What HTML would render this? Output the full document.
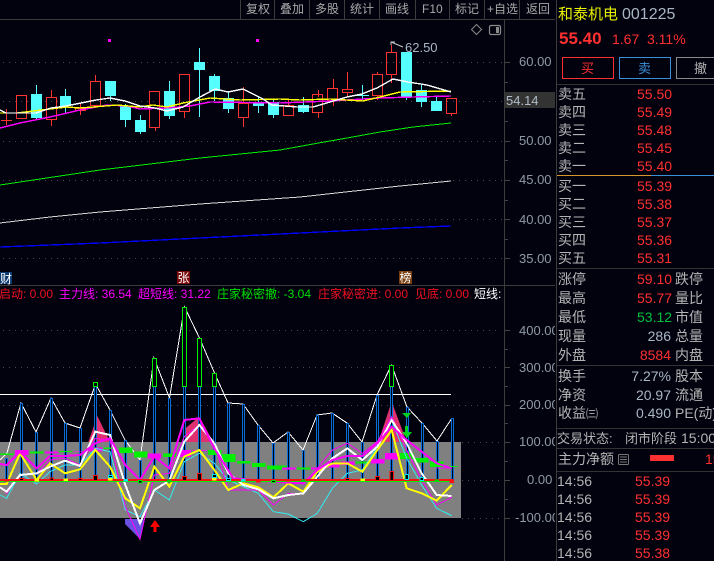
<!DOCTYPE html>
<html><head><meta charset="utf-8">
<style>
html,body{margin:0;padding:0;background:#02020f;width:714px;height:561px;overflow:hidden}
svg{display:block;position:absolute;left:0;top:0}
text{font-family:"Liberation Sans","WenQuanYi Zen Hei","Noto Sans CJK SC",sans-serif;font-size:14px;fill:#b4b4b4}
.t text{font-size:12px;fill:#a8a8a8}
.ax text{font-size:13px;fill:#8f9aa5}
.l text{font-size:12px}
.p{fill:#ff3030}
.c{fill:#a9b6c4}
polyline{shape-rendering:crispEdges}
</style></head><body>
<svg width="714" height="561" viewBox="0 0 714 561" xmlns="http://www.w3.org/2000/svg">
<rect width="714" height="561" fill="#02020f"/>

<!-- dotted grids -->
<g stroke="#4a4a4a" stroke-dasharray="1 5" fill="none" shape-rendering="crispEdges">
<path d="M3 62.5H502M3 101.5H502M3 141.5H502M3 180.5H502M3 219.5H502M3 258.5H502"/>
<path d="M3 330.5H500M3 367.5H500M3 405.5H500M462 442.5H500M462 480.5H500M462 518.5H500"/>
</g>

<!-- MA lines -->
<g fill="none" stroke-width="1">
<polyline stroke="#0000ff" stroke-width="1.3" points="0,247 100,243 200,238 300,233 400,228 451,226"/>
<polyline stroke="#d8d8d8" points="0,223 50,217 100,212 200,204 300,197 400,186 451,181"/>
<polyline stroke="#00f000" points="0,185 100,170 200,158 280,150 313,144 347,138 380,132 413,127 451,123"/>
</g>

<!-- candles -->
<g shape-rendering="crispEdges">
<g fill="none" stroke="#ff3232">
<path d="M6.5 109V125M1 120.5H12"/>
<path d="M51.5 90V97M51.5 119V126M80.5 103V115M75 108.5H86M95.5 75V81M155.5 128V131M184.5 111V118M243.5 87V103M243.5 117V127M288.5 100V105M318.5 90V97M318.5 112V118M333.5 79V88M333.5 100V106M347.5 72V89M347.5 92V96M377.5 72V74M377.5 95V100M391.5 45V52M391.5 74V83M451.5 113V116"/>
<rect x="16.500" y="95.500" width="10" height="23"/>
<rect x="46.500" y="97.500" width="10" height="22"/>
<rect x="75.500" y="108.500" width="10" height="2"/>
<rect x="90.500" y="81.500" width="10" height="24"/>
<rect x="149.500" y="91.500" width="10" height="36"/>
<rect x="179.500" y="74.500" width="10" height="37"/>
<rect x="238.500" y="103.500" width="10" height="14"/>
<rect x="283.500" y="105.500" width="10" height="10"/>
<rect x="312.500" y="94.500" width="10" height="18"/>
<rect x="327.500" y="88.500" width="10" height="12"/>
<rect x="342.500" y="89.500" width="10" height="3"/>
<rect x="372.500" y="74.500" width="10" height="21"/>
<rect x="386.500" y="52.500" width="10" height="22"/>
<rect x="446.500" y="98.500" width="10" height="15"/>
</g>
<g fill="#55ffff" stroke="none">
<rect x="36" y="85" width="1" height="34"/><rect x="31" y="94" width="11" height="24"/>
<rect x="65" y="89" width="1" height="24"/><rect x="60" y="96" width="11" height="10"/>
<rect x="110" y="81" width="1" height="20"/><rect x="105" y="81" width="11" height="15"/>
<rect x="125" y="104" width="1" height="23"/><rect x="120" y="106" width="11" height="14"/>
<rect x="140" y="115" width="1" height="19"/><rect x="135" y="120" width="11" height="12"/>
<rect x="169" y="81" width="1" height="38"/><rect x="164" y="91" width="11" height="25"/>
<rect x="199" y="48" width="1" height="69"/><rect x="194" y="62" width="11" height="8"/>
<rect x="214" y="74" width="1" height="27"/><rect x="209" y="76" width="11" height="15"/>
<rect x="228" y="92" width="1" height="21"/><rect x="223" y="98" width="11" height="11"/>
<rect x="258" y="97" width="1" height="16"/><rect x="253" y="102" width="11" height="4"/>
<rect x="273" y="100" width="1" height="18"/><rect x="268" y="102" width="11" height="13"/>
<rect x="303" y="97" width="1" height="16"/><rect x="298" y="105" width="11" height="7"/>
<rect x="362" y="85" width="1" height="15"/><rect x="356" y="95" width="13" height="1"/>
<rect x="406" y="52" width="1" height="48"/><rect x="401" y="52" width="11" height="45"/>
<rect x="421" y="85" width="1" height="22"/><rect x="416" y="90" width="11" height="12"/>
<rect x="436" y="97" width="1" height="14"/><rect x="431" y="101" width="11" height="10"/>
</g>
</g>

<g fill="none" stroke-width="1.4">
<polyline stroke="#ff00ff" points="0,128 20,123 50,117 80,110 107,105 127,106 140,109 167,108 190,106 210,102 280,103 330,101 380,98 413,97 451,96"/>
<polyline stroke="#ffff00" points="0,113 17,113 33,111 50,109 67,107 80,108 93,107 117,105 140,107 153,105 167,107 183,103 210,98 240,100 280,99 300,100 330,99 363,101 380,97 400,92 451,91"/>
<polyline stroke="#ffffff" points="0,110 6,113 21,113 36,113 51,108 66,106 81,103 96,100 110,98 125,101 140,106 155,108 167,111 183,107 200,97 215,89 228,92 243,89 263,99 272,105 297,107 313,107 330,102 347,97 362,94 377,88 393,79 408,82 427,85 451,92"/>
</g>

<rect x="108" y="39" width="3" height="3" fill="#ff00ff"/>
<rect x="256" y="39" width="3" height="3" fill="#ff00ff"/>

<!-- high flag -->
<path d="M391 45V42H395M391 42L403 47" stroke="#c8c8c8" fill="none"/>
<text x="405" y="52" class="c" style="font-size:13px">62.50</text>

<!-- icons -->
<path d="M476.500 24.500L481.500 29.500L476.500 34.500L471.500 29.500Z" fill="none" stroke="#8a8a8a"/>
<rect x="489.500" y="25.500" width="11" height="9" rx="1.500" fill="none" stroke="#8a8a8a" stroke-width="1.200"/>
<rect x="496" y="27" width="3" height="6" fill="#8a8a8a"/>

<!-- subchart grey region -->
<rect x="0" y="442" width="461" height="76" fill="#808080"/>

<!-- pink/purple fills -->
<g transform="translate(0,410) scale(.33333)">
<path d="M292 18L265 96H330Z" fill="#e0306f"/>
<path d="M598 20L556 55V96H640Z" fill="#e0306f"/>
<path d="M1175 -25L1135 96H1220Z" fill="#e0306f"/>
<path d="M375 327V342L421 388L432 327Z" fill="#6a50e0"/>
</g>

<!-- thin white -->
<polyline fill="none" stroke="#fff" points="0,460 7,453 21,403 36,432 51,398 65,423 80,428 95.5,384 110,410 125,440 140,460 154,358 169.5,398 184.5,307 199.5,338 214.5,373 228,403 243,404 258,425 273,443 288,432 303,450 317,415 332,413 347,423 362,442 377,395 391.5,365 407,407 422,423 437,441 452,418"/>
<rect x="0" y="394" width="451" height="1" fill="#fff"/>

<!-- blue bars -->
<g stroke="#0a6ed8" stroke-width="3" fill="none" shape-rendering="crispEdges">
<path d="M6.500 458V480M21.500 403V480M36.500 432V480M51.500 398V480M65.500 423V480M80.500 428V480M95.500 387V480M110.500 410V480M125.500 440V480M140.500 460V480M154.500 387V480M169.500 398V480M184.500 387V480M199.500 387V480M214.500 387V480M228.500 403V480M243.500 404V480M258.500 425V480M273.500 443V480M288.500 432V480M303.500 450V480M317.500 415V480M332.500 413V480M347.500 423V480M362.500 442V480M377.500 395V480M391.500 387V480M407.500 407V480M422.500 423V480M437.500 441V480M452.500 418V480"/>
</g>
<g stroke="#02020f" stroke-width="1" fill="none" shape-rendering="crispEdges">
<path d="M6.500 459V480M21.500 404V480M36.500 433V480M51.500 399V480M65.500 424V480M80.500 429V480M95.500 387V480M110.500 411V480M125.500 441V480M140.500 461V480M154.500 387V480M169.500 399V480M184.500 387V480M199.500 387V480M214.500 387V480M228.500 404V480M243.500 405V480M258.500 426V480M273.500 444V480M288.500 433V480M303.500 451V480M317.500 416V480M332.500 414V480M347.500 424V480M362.500 443V480M377.500 396V480M391.500 387V480M407.500 408V480M422.500 424V480M437.500 442V480M452.500 419V480"/>
</g>
<!-- green hollow tops -->
<g fill="#02020f" stroke="#00f000" shape-rendering="crispEdges">
<rect x="93.500" y="382.500" width="4" height="4"/>
<rect x="152.500" y="358.500" width="4" height="28"/>
<rect x="182.500" y="307.500" width="4" height="79"/>
<rect x="197.500" y="338.500" width="4" height="48"/>
<rect x="212.500" y="373.500" width="4" height="13"/>
<rect x="389.500" y="365.500" width="4" height="21"/>
</g>

<!-- horizontal block bars & lines -->
<g transform="translate(0,410) scale(.33333)" shape-rendering="crispEdges">
<g fill="#00f000">
<rect x="0" y="131" width="40" height="4"/><rect x="90" y="125" width="40" height="6"/><rect x="176" y="123" width="40" height="3"/>
<rect x="311" y="113" width="40" height="4"/><rect x="357" y="113" width="40" height="16"/><rect x="402" y="125" width="40" height="18"/>
<rect x="489" y="131" width="40" height="10"/><rect x="624" y="120" width="40" height="15"/><rect x="666" y="132" width="40" height="24"/>
<rect x="711" y="153" width="40" height="8"/><rect x="756" y="159" width="40" height="12"/><rect x="801" y="167" width="40" height="12"/>
<rect x="841" y="167" width="20" height="12"/><rect x="891" y="173" width="40" height="6"/><rect x="1067" y="155" width="40" height="6"/>
<rect x="1200" y="129" width="40" height="18"/><rect x="1245" y="144" width="40" height="14"/><rect x="1290" y="155" width="40" height="16"/><rect x="1335" y="168" width="38" height="3"/>
</g>
<g fill="#ff00ff">
<rect x="45" y="120" width="40" height="15"/><rect x="135" y="124" width="40" height="7"/><rect x="221" y="124" width="40" height="2"/>
<rect x="267" y="113" width="40" height="12"/><rect x="443" y="131" width="40" height="14"/><rect x="533" y="120" width="40" height="21"/>
<rect x="579" y="120" width="40" height="3"/><rect x="846" y="173" width="40" height="6"/><rect x="933" y="172" width="40" height="7"/>
<rect x="978" y="161" width="40" height="12"/><rect x="1023" y="155" width="40" height="10"/><rect x="1113" y="147" width="40" height="14"/>
<rect x="1155" y="129" width="40" height="20"/><rect x="1310" y="172" width="40" height="4"/>
</g>
</g>

<!-- sub lines -->
<g transform="translate(0,410) scale(.33333)" fill="none">
<polyline stroke="#33e8f0" stroke-width="3" points="0,255 20,265 60,190 110,222 150,185 195,165 240,165 286,115 330,125 376,300 420,320 463,240 508,270 553,155 598,130 643,160 685,210 730,230 775,250 820,305 865,312 910,335 952,310 997,235 1042,190 1087,180 1132,110 1175,30 1220,145 1265,225 1310,295 1355,317"/>
<polyline stroke="#ff00ff" stroke-width="3" points="0,230 20,250 60,195 110,190 150,150 195,145 240,165 286,85 330,90 376,290 420,388 463,195 508,190 553,80 598,45 643,100 685,240 730,240 775,240 820,285 865,250 910,250 952,175 997,120 1042,100 1087,130 1132,95 1175,20 1220,120 1265,210 1310,285 1355,262"/>
<polyline stroke="#ffff00" stroke-width="6" points="0,222 20,222 60,130 110,210 150,160 195,190 240,178 286,120 330,170 376,265 420,295 463,170 508,230 553,140 598,120 643,180 685,240 730,220 775,232 820,262 865,220 910,245 952,185 997,160 1042,160 1087,185 1132,120 1175,60 1220,235 1265,250 1310,272 1355,225"/>
<polyline stroke="#ffffff" stroke-width="6" points="0,232 20,245 60,195 110,190 150,170 195,152 240,168 286,65 330,75 376,225 420,340 463,240 508,212 553,95 598,45 643,100 685,190 730,225 775,238 820,265 865,255 910,250 952,200 997,145 1042,115 1087,150 1132,110 1175,30 1220,100 1265,190 1310,255 1355,258"/>
<polyline stroke="#ff00ff" stroke-width="6" points="0,162 20,165 60,125 110,175 150,138 195,138 240,135 286,100 330,85 376,165 420,210 463,140 508,175 553,30 598,25 643,115 700,205 820,215 910,220 952,180 997,150 1042,138 1087,138 1132,100 1175,50 1220,90 1265,125 1310,160 1355,175"/>
</g>

<!-- red & green base lines -->
<rect x="0" y="481" width="453" height="1" fill="#00f000" shape-rendering="crispEdges"/>
<rect x="0" y="479" width="453" height="2" fill="#ff1010" shape-rendering="crispEdges"/>

<!-- little markers -->
<g transform="translate(0,410) scale(.33333)" shape-rendering="crispEdges" stroke-width="3">
<g fill="#ff1010"><rect x="13" y="208" width="14" height="7"/><rect x="768" y="208" width="14" height="10"/><rect x="858" y="208" width="14" height="7"/><rect x="1348" y="208" width="14" height="11"/></g>
<g fill="#000" stroke="#ff1010"><rect x="59" y="205" width="11" height="6"/><rect x="150" y="204" width="11" height="7"/><rect x="235" y="205" width="11" height="6"/><rect x="281" y="196" width="11" height="15"/><rect x="548" y="199" width="11" height="12"/><rect x="593" y="190" width="11" height="21"/><rect x="1037" y="205" width="11" height="6"/><rect x="1127" y="199" width="11" height="12"/><rect x="1170" y="184" width="11" height="27"/></g>
<g fill="#ffff00"><rect x="103" y="207" width="14" height="7"/><rect x="190" y="205" width="14" height="8"/><rect x="324" y="203" width="14" height="9"/><rect x="636" y="203" width="14" height="9"/><rect x="1081" y="205" width="14" height="8"/></g>
<g fill="#000" stroke="#00e8f0"><rect x="326" y="197" width="11" height="6"/><rect x="638" y="194" width="11" height="9"/><rect x="680" y="205" width="11" height="7"/><rect x="1215" y="194" width="11" height="15"/><rect x="1260" y="203" width="11" height="9"/></g>
<g fill="#00e8f0"><rect x="370" y="207" width="14" height="7"/><rect x="723" y="207" width="14" height="7"/></g>
<g fill="#000" stroke="#00e000"><rect x="415" y="211" width="11" height="8"/><rect x="815" y="211" width="11" height="6"/></g>
<g fill="#00d000"><rect x="501" y="209" width="14" height="8"/><rect x="903" y="209" width="14" height="7"/><rect x="1303" y="209" width="14" height="6"/></g>
</g>

<!-- arrows -->
<path d="M155 520L160 527H156.500V532H153.500V527H150Z" fill="#ff0000"/>
<path d="M402 413H411L407 418Z" fill="#00d020"/>
<path d="M405 426H408V432H412L407 438L402 432H405Z" fill="#00d020"/>

<!-- panel lines -->
<g fill="#3c3c3c" shape-rendering="crispEdges">
<rect x="0" y="19" width="555" height="1"/>
<rect x="0" y="285" width="555" height="1"/>
<rect x="504" y="19" width="1" height="542"/>
<rect x="240" y="0" width="1" height="19"/><rect x="274" y="0" width="1" height="19"/><rect x="309" y="0" width="1" height="19"/><rect x="344" y="0" width="1" height="19"/><rect x="379" y="0" width="1" height="19"/><rect x="415" y="0" width="1" height="19"/><rect x="449" y="0" width="1" height="19"/><rect x="484" y="0" width="1" height="19"/><rect x="519" y="0" width="1" height="19"/>
</g>
<path d="M505 62.500H510M505 82.500H508M505 101.500H510M505 121.500H508M505 141.500H510M505 160.500H508M505 180.500H510M505 200.500H508M505 219.500H510M505 239.500H508M505 258.500H510M505 330.500H510M505 349.500H508M505 367.500H510M505 386.500H508M505 405.500H510M505 423.500H508M505 442.500H510M505 461.500H508M505 480.500H510M505 499.500H508M505 518.500H510" stroke="#444" fill="none" shape-rendering="crispEdges"/>

<!-- toolbar -->
<g class="t">
<text x="246" y="13">复权</text><text x="280" y="13">叠加</text><text x="315" y="13">多股</text><text x="350" y="13">统计</text><text x="385" y="13">画线</text><text x="422" y="13">F10</text><text x="455" y="13">标记</text><text x="487" y="13">+自选</text><text x="526" y="13">返回</text>
</g>

<!-- badges -->
<rect x="0" y="272" width="12" height="12" fill="#0c3a70"/><text x="0" y="283" style="font-size:12px;fill:#fff">财</text>
<rect x="177" y="271" width="13" height="13" fill="#7a0a0a"/><text x="177.500" y="282" style="font-size:12px;fill:#fff">张</text>
<rect x="399" y="271" width="13" height="13" fill="#7a4010"/><text x="399.500" y="282" style="font-size:12px;fill:#fff">榜</text>

<!-- legend -->
<g class="l">
<text x="-1" y="298" style="fill:#f01020">启动: 0.00</text>
<text x="59" y="298" style="fill:#ff00ff">主力线: 36.54</text>
<text x="138" y="298" style="fill:#ff00ff">超短线: 31.22</text>
<text x="217" y="298" style="fill:#00e000">庄家秘密撤: -3.04</text>
<text x="318" y="298" style="fill:#f01020">庄家秘密进: 0.00</text>
<text x="415" y="298" style="fill:#f01020">见底: 0.00</text>
<text x="474" y="298" style="fill:#fff">短线:</text>
</g>

<!-- axis labels -->
<rect x="505" y="92" width="50" height="16" fill="#333"/>
<g class="ax">
<text x="519" y="66">60.00</text>
<text x="506" y="105" style="fill:#b0bcc8">54.14</text>
<text x="519" y="145">50.00</text>
<text x="519" y="184">45.00</text>
<text x="519" y="224">40.00</text>
<text x="519" y="263">35.00</text>
<text x="519" y="335">400.00</text>
<text x="519" y="372">300.00</text>
<text x="519" y="409">200.00</text>
<text x="519" y="446">100.00</text>
<text x="527" y="484">0.00</text>
<text x="515" y="522">-100.00</text>
</g>

<!-- right panel -->
<rect x="555" y="0" width="159" height="561" fill="#02020f"/>
<rect x="556" y="0" width="1" height="561" fill="#3c3c3c"/>
<text x="558" y="19" style="font-size:15px;fill:#e8f000">和泰机电</text>
<text x="622" y="19" class="c" style="font-size:16px">001225</text>
<text x="559" y="44" style="font-size:17px;font-weight:bold;fill:#ff3030">55.40</text>
<text x="612" y="44" class="p">1.67</text>
<text x="647" y="44" class="p">3.11%</text>
<rect x="562.500" y="57.500" width="51" height="21" fill="none" stroke="#ff3030"/>
<text x="581" y="73" class="p" style="font-size:13px">买</text>
<rect x="619.500" y="57.500" width="51" height="21" fill="none" stroke="#3a90d8"/>
<text x="638" y="73" style="font-size:13px;fill:#3a90d8">卖</text>
<rect x="676.500" y="57.500" width="51" height="21" fill="none" stroke="#8a8a8a"/>
<text x="694" y="73" style="font-size:13px">撤</text>
<g fill="#333" shape-rendering="crispEdges">
<rect x="557" y="84" width="157" height="1"/><rect x="557" y="268" width="157" height="1"/><rect x="557" y="365" width="157" height="1"/><rect x="557" y="428" width="157" height="1"/><rect x="557" y="448" width="157" height="1"/><rect x="557" y="471" width="157" height="1"/>
</g>
<rect x="557" y="175" width="94" height="1" fill="#d8962a"/><rect x="651" y="175" width="63" height="1" fill="#3a90d8"/>

<g>
<text x="558" y="99">卖五</text><text x="637" y="99" class="p">55.50</text>
<text x="558" y="117">卖四</text><text x="637" y="117" class="p">55.49</text>
<text x="558" y="135">卖三</text><text x="637" y="135" class="p">55.48</text>
<text x="558" y="153">卖二</text><text x="637" y="153" class="p">55.45</text>
<text x="558" y="171">卖一</text><text x="637" y="171" class="p">55.40</text>
<text x="558" y="191">买一</text><text x="637" y="191" class="p">55.39</text>
<text x="558" y="209">买二</text><text x="637" y="209" class="p">55.38</text>
<text x="558" y="227">买三</text><text x="637" y="227" class="p">55.37</text>
<text x="558" y="245">买四</text><text x="637" y="245" class="p">55.36</text>
<text x="558" y="263">买五</text><text x="637" y="263" class="p">55.31</text>

<text x="558" y="284">涨停</text><text x="637" y="284" class="p">59.10</text><text x="675" y="284">跌停</text>
<text x="558" y="303">最高</text><text x="637" y="303" class="p">55.77</text><text x="675" y="303">量比</text>
<text x="558" y="322">最低</text><text x="637" y="322" style="fill:#00c040">53.12</text><text x="675" y="322">市值</text>
<text x="558" y="341">现量</text><text x="671" y="341" text-anchor="end" class="c">286</text><text x="675" y="341">总量</text>
<text x="558" y="360">外盘</text><text x="671" y="360" text-anchor="end" class="p">8584</text><text x="675" y="360">内盘</text>

<text x="558" y="381">换手</text><text x="671" y="381" text-anchor="end" class="c">7.27%</text><text x="675" y="381">股本</text>
<text x="558" y="400">净资</text><text x="671" y="400" text-anchor="end" class="c">20.97</text><text x="675" y="400">流通</text>
<text x="558" y="418">收益</text><text x="586" y="418" style="font-size:12px">㈢</text><text x="671" y="418" text-anchor="end" class="c">0.490</text><text x="675" y="418">PE(动)</text>

<text x="557" y="443" style="font-size:13px">交易状态:</text><text x="625" y="443" style="font-size:13px">闭市阶段</text><text x="681" y="443">15:00</text>
<text x="558" y="464">主力净额</text>
<rect x="618.500" y="454.500" width="10" height="10" rx="1" fill="none" stroke="#777"/>
<path d="M620 457H627M620 459.500H627M620 462H627" stroke="#777" fill="none"/>
<rect x="650" y="455" width="24" height="6" fill="#ff3030"/>
<text x="705" y="464" class="p">15</text>

<text x="557" y="486">14:56</text><text x="635" y="486" class="p">55.39</text>
<text x="557" y="504">14:56</text><text x="635" y="504" class="p">55.39</text>
<text x="557" y="522">14:56</text><text x="635" y="522" class="p">55.39</text>
<text x="557" y="540">14:56</text><text x="635" y="540" class="p">55.39</text>
<text x="557" y="558">14:56</text><text x="635" y="558" class="p">55.38</text>
</g>
</svg>
</body></html>
